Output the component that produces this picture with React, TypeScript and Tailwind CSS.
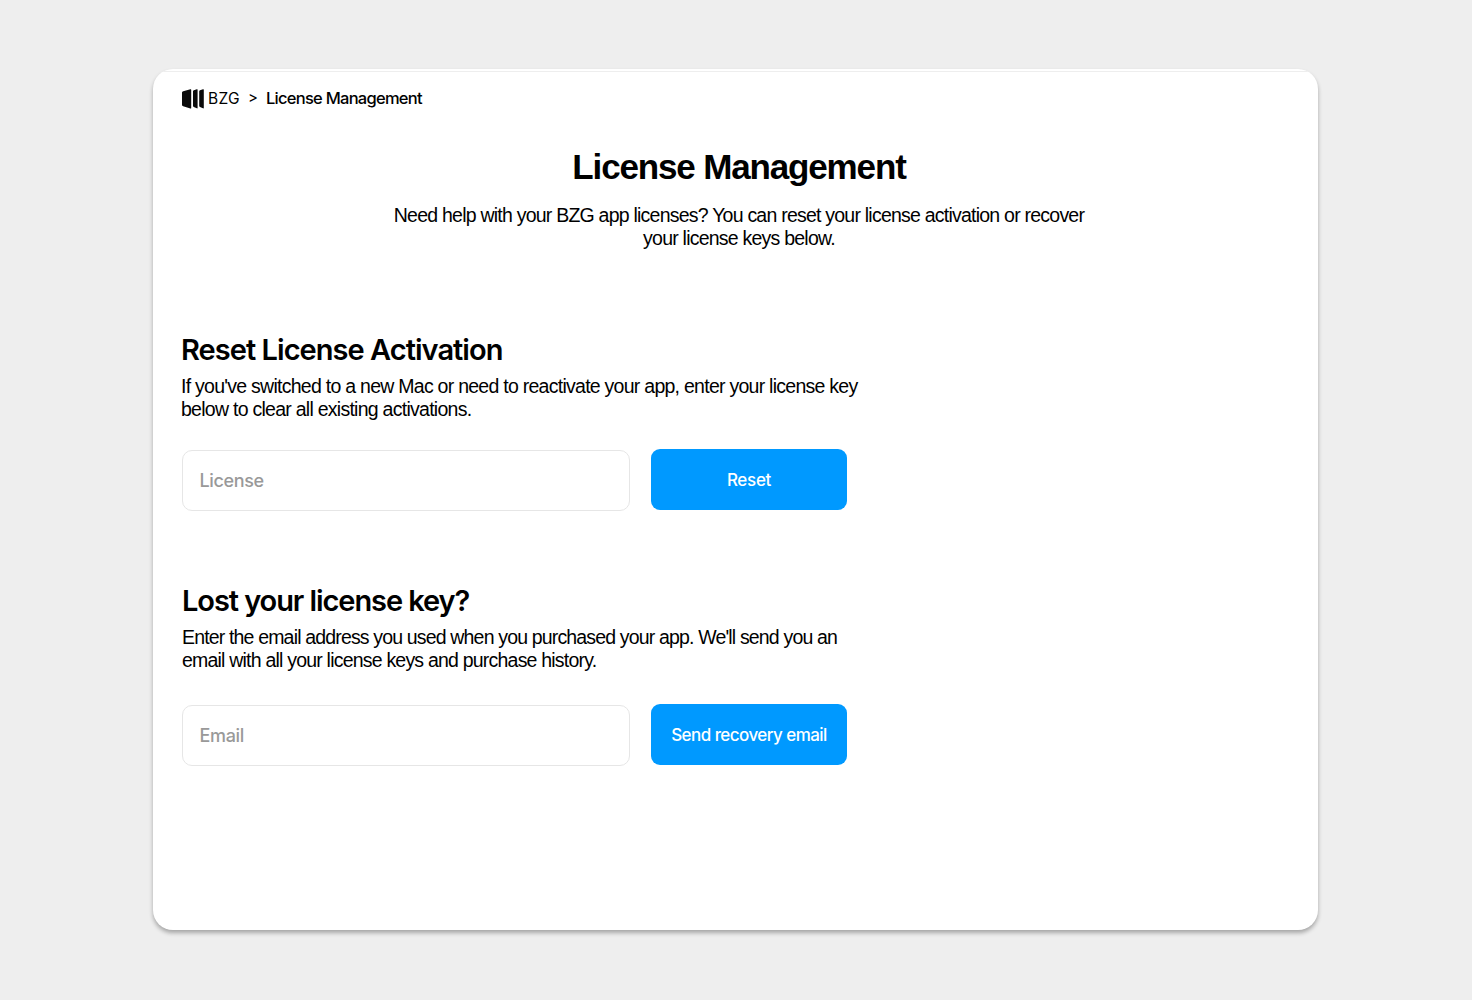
import type { ReactNode } from "react";

function Logo() {
  return (
    <svg width="23" height="20" viewBox="0 0 23 20" fill="#0a0a0a" aria-hidden="true">
      <path d="M1.2 2.2 8.4.2Q9.2 0 9.2.7V18.9Q9.2 19.6 8.4 19.4L1.2 17.2Q0 16.9 0 15.9V3.4Q0 2.5 1.2 2.2Z" />
      <path d="M11.8 1.3 14.8.3Q15.6 0 15.6.8V18.8Q15.6 19.6 14.8 19.3L11.8 17.9Q11 17.5 11 16.8V2.4Q11 1.6 11.8 1.3Z" />
      <path d="M18 1.3 21 .3Q21.8 0 21.8.8V18.8Q21.8 19.6 21 19.3L18 17.9Q17.2 17.5 17.2 16.8V2.4Q17.2 1.6 18 1.3Z" />
    </svg>
  );
}

type LicenseFormProps = {
  title: ReactNode;
  description: ReactNode;
  placeholder: string;
  button: ReactNode;
  type?: string;
};

function LicenseForm({ title, description, placeholder, button, type = "text" }: LicenseFormProps) {
  return (
    <section>
      {title}
      {description}
      <form className="flex items-start gap-[21px]" onSubmit={(e) => e.preventDefault()}>
        <input
          type={type}
          placeholder={placeholder}
          aria-label={placeholder}
          className="ml-px mt-px h-[61px] w-[448px] rounded-[10px] border border-[#e6e6e6] px-[16.5px] text-[18px] font-medium tracking-[-0.35px] placeholder:text-[#999] outline-none"
        />
        {button}
      </form>
    </section>
  );
}

export default function App() {
  return (
    <div className="flex h-[1000px] w-[1472px] bg-[#eeeeee] pl-[153px] pt-[69px] font-['Inter',sans-serif] text-black">
      <main className="h-[861px] w-[1165px] overflow-hidden rounded-[20px] bg-white shadow-[0_3px_4px_rgba(0,0,0,0.3)]">
        <div className="h-[3px] border-b border-[#eeeeee]" />

        {/* Breadcrumb */}
        <nav className="flex h-[53px] items-center pl-[29px]">
          <Logo />
          <span className="ml-[3px] w-[32px] whitespace-nowrap text-[15.5px] tracking-[0.3px]">BZG</span>
          <span className="ml-[8px] w-[10px] text-[15px]">&gt;</span>
          <span className="ml-[8px] whitespace-nowrap text-[16.5px] font-medium tracking-[-0.74px]">License Management</span>
        </nav>

        {/* Intro */}
        <header className="ml-[7px] pt-[22px] text-center font-['Liberation_Sans',sans-serif]">
          <h1 className="text-[35px] leading-[40px] font-bold tracking-[-1.15px]">License Management</h1>
          <p className="mt-[17px] text-[19.5px] leading-[23px] tracking-[-0.77px]">
            Need help with your BZG app licenses? You can reset your license activation or recover
            <br />
            your license keys below.
          </p>
        </header>

        <div className="pl-[28px] pt-[82px]">
          <LicenseForm
            title={<h2 className="text-[29px] leading-[36px] font-semibold tracking-[-0.96px]">Reset License Activation</h2>}
            description={
              <p className="mt-[7px] mb-[28px] font-['Liberation_Sans',sans-serif] text-[19.5px] leading-[23px] tracking-[-0.735px]">
                If you've switched to a new Mac or need to reactivate your app, enter your license key
                <br />
                below to clear all existing activations.
              </p>
            }
            placeholder="License"
            button={
              <button type="submit" className="h-[61px] w-[196px] rounded-[9px] bg-[#0099ff] pt-[2px] text-[17px] font-medium tracking-[-0.3px] text-white">
                Reset
              </button>
            }
          />
        </div>

        <div className="pl-[28px] pt-[72px]">
          <LicenseForm
            title={<h2 className="pl-px text-[29px] leading-[36px] font-semibold tracking-[-1.08px]">Lost your license key?</h2>}
            description={
              <p className="mt-[7px] mb-[31.5px] pl-px font-['Liberation_Sans',sans-serif] text-[19.5px] leading-[23px] tracking-[-0.835px]">
                Enter the email address you used when you purchased your app. We'll send you an
                <br />
                <span className="tracking-[-0.79px]">email with all your license keys and purchase history.</span>
              </p>
            }
            type="email"
            placeholder="Email"
            button={
              <button type="submit" className="mt-[0.5px] h-[61px] w-[196px] rounded-[9px] bg-[#0099ff] pt-[3px] text-[17px] font-medium tracking-[-0.55px] text-white">
                Send recovery email
              </button>
            }
          />
        </div>
      </main>
    </div>
  );
}
